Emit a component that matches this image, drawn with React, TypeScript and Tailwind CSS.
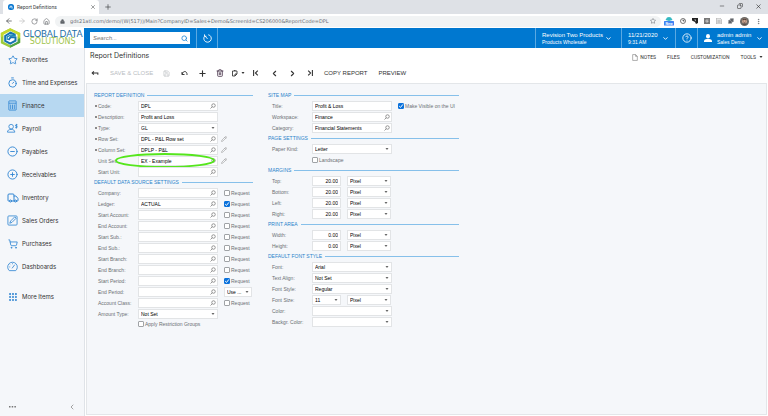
import { useId, useState } from "react";
import type { ReactNode } from "react";
import {
  ArrowLeft, ArrowRight, ChevronDown, ChevronLeft, ChevronRight, CircleHelp, CircleMinus,
  CirclePlus, Copy, EllipsisVertical, Grip, House, Lock, Minus, Pencil, Plus, Puzzle, RotateCw,
  Save, Search, ShoppingCart, Star, Timer, Trash2, Truck, X,
} from "lucide-react";

function Caret({ className = "" }: { className?: string }) {
  return (
    <svg viewBox="0 0 6 4" className={`h-[2px] w-[4px] shrink-0 ${className}`} fill="currentColor">
      <path d="M0 0h6L3 4z" />
    </svg>
  );
}

/* ---------- browser chrome ---------- */

function BrowserChrome() {
  return (
    <div className="font-[Roboto,sans-serif]">
      <div className="flex h-[14px] items-end bg-[#dee1e6]">
        <div className="ml-[3px] flex h-[14px] w-[96px] items-center rounded-t-[3px] bg-white pr-[3px] pl-[5px] text-[5px] text-[#3c4043]">
          <svg viewBox="0 0 12 12" className="mr-[3px] size-[6px]">
            <rect width="12" height="12" rx="5" fill="#0a78d1" />
            <path d="M4 8V6a2 2 0 1 1 4 0v3" fill="none" stroke="#fff" strokeWidth="1.8" />
          </svg>
          <span>Report Definitions</span>
          <button aria-label="Close tab" className="ml-auto"><X size={6} /></button>
        </div>
        <button aria-label="New tab" className="ml-[5px] flex h-[14px] items-center text-[#3c4043]"><Plus size={8} /></button>
        <div className="ml-auto flex h-[12px] items-center self-start text-[#222]">
          <button aria-label="Minimize" className="flex w-[18px] justify-center"><Minus size={6} /></button>
          <button aria-label="Restore" className="flex w-[18px] justify-center"><Copy size={6} className="-scale-x-100" /></button>
          <button aria-label="Close" className="flex w-[19px] justify-center"><X size={7} /></button>
        </div>
      </div>
      <div className="flex h-[14px] items-center bg-white pl-[5px] text-[#5f6368]">
        <button aria-label="Back" className="mr-[5px] text-[#3c4043]"><ArrowLeft size={8} /></button>
        <button aria-label="Forward" className="mr-[5px] text-[#bbb]"><ArrowRight size={8} /></button>
        <button aria-label="Reload" className="mr-[5px]"><RotateCw size={7} /></button>
        <button aria-label="Home"><House size={7} /></button>
        <div className="ml-[5px] flex h-[11px] flex-1 items-center rounded-full bg-[#f1f3f4] px-[5px]">
          <Lock size={5} fill="currentColor" />
          <input aria-label="Address" readOnly className="ml-[5px] h-[10px] flex-1 bg-transparent font-['DejaVu_Sans',sans-serif] text-[5px] leading-[10px] text-[#6b6f74] outline-none"
            value="gds21atl.com/demo/(W(517))/Main?CompanyID=Sales+Demo&ScreenId=CS206000&ReportCode=DPL" />
          <button aria-label="Bookmark"><Star size={6} /></button>
        </div>
        <div className="flex w-[107px] items-center justify-between pr-[6px] pl-[3px]">
          <svg viewBox="0 0 20 20" className="size-[10px]">
            <path d="M3 8l3-5 4-1 4 1 3 5-7 2z" fill="#35b9c2" />
            <rect y="10" width="20" height="9" rx="1" fill="#3f83f3" />
            <text x="10" y="17" textAnchor="middle" fontSize="7" fontWeight="700" fill="#fff">New</text>
          </svg>
          <svg viewBox="0 0 12 12" className="size-[6px]" fill="none" stroke="#555" strokeWidth="1.6">
            <circle cx="6" cy="6" r="5" /><path d="M6 6l3-3M6 3v3h3" />
          </svg>
          <svg viewBox="0 0 12 12" className="size-[6px]">
            <path d="M0 0h12v10l-4 2-2-4-6-3z" fill="#222" /><path d="M4 3h4v4z" fill="#aaa" />
          </svg>
          <svg viewBox="0 0 12 12" className="size-[6px]">
            <rect width="12" height="12" fill="#777" /><path d="M9 4H4v4h4V6H6" stroke="#fff" fill="none" />
          </svg>
          <svg viewBox="0 0 12 12" className="size-[6px]">
            <path d="M1 0h7l3 3v9H1z" fill="#e4e4e4" stroke="#999" /><path d="M3 5h6M3 7h6M3 9h6" stroke="#aaa" />
          </svg>
          <Puzzle size={6} fill="currentColor" />
          <svg viewBox="0 0 18 18" className="size-[9px]">
            <circle cx="9" cy="9" r="9" fill="#6d6a66" />
            <circle cx="9" cy="8" r="5" fill="#cda893" />
            <path d="M4 7c1-5 9-5 10 0-3-2-7-2-10 0zM5 15c2-3 6-3 8 0z" fill="#4b3b35" />
            <path d="M6 8h2M10 8h2M7 11h4" stroke="#4b3b35" />
          </svg>
          <button aria-label="Menu"><EllipsisVertical size={7} /></button>
        </div>
      </div>
    </div>
  );
}

/* ---------- app header ---------- */

function Logo() {
  return (
    <div className="flex h-[20px] w-[84px] shrink-0 items-center overflow-hidden bg-white">
      <svg viewBox="0 0 62 60" className="h-[20px] w-[21px] shrink-0">
        <path d="M30 1L60 15V44L30 59L2 46V15z" fill="#9ccb3b" />
        <path d="M30 1L60 15V30L30 14L2 28V15z" fill="#c3d82e" />
        <path d="M60 30V44L30 59V47z" fill="#4ea447" />
        <path d="M31 9L52 20V41L31 52L10 41V20z" fill="#fff" />
        <path d="M46 21L31 14L15 24V39L30 47L46 38V28L32 27L25 36" fill="none" stroke="#1673b1" strokeWidth="6" />
        <path d="M21 36V27L32 21L47 24" fill="none" stroke="#1b8bb5" strokeWidth="4" />
      </svg>
      <div className="ml-[2px] flex flex-col items-center whitespace-nowrap">
        <span className="font-[Lato,sans-serif] text-[9px] leading-[8px] text-[#1b6ea5]">GLOBAL DATA</span>
        <span className="font-['DejaVu_Sans',sans-serif] text-[8px] leading-[8px] text-[#9fc54d]">SOLUTIONS</span>
      </div>
    </div>
  );
}

function HeaderText({ top, bottom }: { top: string; bottom: string }) {
  return (
    <span className="flex flex-col text-left whitespace-nowrap">
      <span className="text-[6px] leading-[7px]">{top}</span>
      <span className="text-[5px] leading-[6px]">{bottom}</span>
    </span>
  );
}

function Header() {
  return (
    <header className="flex h-[20px] bg-[#0078d0] text-white">
      <Logo />
      <div className="flex w-[112px] items-center px-[6px]">
        <label className="flex h-[12px] w-full items-center bg-white pr-[2px] pl-[3px]">
          <input aria-label="Search" placeholder="Search..." className="h-[12px] min-w-0 flex-1 text-[6px] text-[#333] italic outline-none placeholder:text-[#777]" />
          <Search size={7} strokeWidth={3} className="text-[#2d8fd8]" />
        </label>
      </div>
      <button aria-label="Business date" className="flex w-[22px] items-center justify-center border-x border-[#5aa9e2]">
        <svg viewBox="0 0 24 24" className="size-[9px]" fill="none" stroke="currentColor" strokeWidth="2.4">
          <path d="M14 2A10 10 0 1 1 4 6M12 13L5 5M4 1v5h5" />
        </svg>
      </button>
      <button className="ml-auto flex w-[86px] items-center border-l border-[#5aa9e2] pl-[6px]">
        <HeaderText top="Revision Two Products" bottom="Products Wholesale" />
        <ChevronDown size={7} strokeWidth={3} className="mr-[9px] ml-auto" />
      </button>
      <button className="flex w-[54px] items-center border-l border-[#5aa9e2] pl-[6px]">
        <HeaderText top="11/21/2020" bottom="9:31 AM" />
        <ChevronDown size={7} strokeWidth={3} className="mr-[6px] ml-auto" />
      </button>
      <button aria-label="Help" className="flex w-[22px] items-center justify-center border-l border-[#5aa9e2]"><CircleHelp size={10} /></button>
      <button className="flex w-[71px] items-center border-l border-[#5aa9e2] pl-[6px]">
        <svg viewBox="0 0 16 16" className="mr-[5px] size-[8px]" fill="currentColor">
          <ellipse cx="8" cy="4.5" rx="4" ry="4.5" /><path d="M0 16v-3c1-3 5-3 8-3s7 0 8 3v3z" />
        </svg>
        <HeaderText top="admin admin" bottom="Sales Demo" />
        <ChevronDown size={7} strokeWidth={3} className="mr-[5px] ml-auto" />
      </button>
    </header>
  );
}

/* ---------- sidebar ---------- */

function NavIcon({ children }: { children: ReactNode }) {
  return (
    <svg viewBox="0 0 24 24" className="size-[11px]" fill="none" stroke="currentColor" strokeWidth="1.8">
      {children}
    </svg>
  );
}

const NAV: { label: string; icon: ReactNode }[] = [
  { label: "Favorites", icon: <Star size={10} strokeWidth={2} /> },
  { label: "Time and Expenses", icon: <Timer size={11} strokeWidth={2} /> },
  { label: "Finance", icon: <NavIcon><rect x="4" y="2" width="16" height="20" rx="1" /><path d="M4 7h16M8 10v10M12 10v10M16 10v10" /></NavIcon> },
  { label: "Payroll", icon: <NavIcon><circle cx="9" cy="8" r="5" /><path d="M1 20c0-4 3-6 8-6s8 2 8 6zM23 4h-3c-2 0-2 3 0 3h1c2 0 2 3 0 3h-3M20.500 2v10" /></NavIcon> },
  { label: "Payables", icon: <CircleMinus size={11} strokeWidth={2} /> },
  { label: "Receivables", icon: <CirclePlus size={11} strokeWidth={2} /> },
  { label: "Inventory", icon: <Truck size={12} strokeWidth={2} /> },
  { label: "Sales Orders", icon: <NavIcon><rect x="2" y="2" width="20" height="20" rx="2" /><path d="M6 18l2-5L17 4l3 3-9 9z" /></NavIcon> },
  { label: "Purchases", icon: <ShoppingCart size={10} strokeWidth={2} /> },
  { label: "Dashboards", icon: <NavIcon><path d="M5 21a10.500 10.500 0 1 1 14 0z" /><path d="M11 16l6-8M5 13h2M12 5v2M7 8l1 1" /></NavIcon> },
];

function Sidebar() {
  const [active, setActive] = useState("Finance");
  return (
    <nav className="flex w-[84px] shrink-0 flex-col bg-[#f5f7fa] font-[Inter,sans-serif] text-[6px] text-[#333]">
      {NAV.map((n) => (
        <a key={n.label} href="#" onClick={() => setActive(n.label)}
          className={`flex h-[23px] items-center whitespace-nowrap ${active === n.label ? "bg-[#b7d8f1]" : ""}`}>
          <span className="ml-[6px] flex w-[13px] justify-center text-[#3085d2]">{n.icon}</span>
          <span className="ml-[3px]">{n.label}</span>
        </a>
      ))}
      <a href="#" className="mt-[7px] flex h-[23px] items-center">
        <span className="ml-[6px] flex w-[13px] justify-center text-[#3085d2]"><Grip size={10} strokeWidth={3} /></span>
        <span className="ml-[3px]">More Items</span>
      </a>
      <div className="mt-auto flex h-[18px] items-center justify-between pr-[8px] pl-[9px] text-[#777]">
        <button aria-label="More">
          <svg viewBox="0 0 7 2" className="h-[2px] w-[7px]" fill="currentColor"><path d="M0 0h1.500v1.500H0zM2.700 0h1.500v1.500H2.700zM5.400 0h1.500v1.500H5.400z" /></svg>
        </button>
        <button aria-label="Collapse"><ChevronLeft size={8} /></button>
      </div>
    </nav>
  );
}

/* ---------- form controls ---------- */

const BOX = "flex h-[10px] items-center border border-[#e2e4e6] bg-white";

function TextBox({ id, value = "", lookup = false, label }: { id?: string; value?: string; lookup?: boolean; label?: string }) {
  return (
    <div className={`${BOX} w-[80px] shrink-0`}>
      <input id={id} aria-label={label} defaultValue={value} className="h-[8px] min-w-0 flex-1 pl-[2px] text-[5px] leading-[8px] text-black outline-none" />
      {lookup && (
        <button aria-label="Look up" className="px-[1px] text-[#777]">
          <svg viewBox="0 0 12 12" className="size-[6px]" fill="none" stroke="currentColor" strokeWidth="1.500">
            <circle cx="7" cy="5" r="3.500" /><path d="M4.500 7.500L1 11" />
          </svg>
        </button>
      )}
    </div>
  );
}

function NumberBox({ id, value }: { id?: string; value: string }) {
  return (
    <div className={`${BOX} mr-[6px] w-[29px] shrink-0`}>
      <input id={id} defaultValue={value} className="h-[8px] w-full pr-[2px] text-right text-[5px] leading-[8px] text-black outline-none" />
    </div>
  );
}

function Select({ id, value = "", width = "w-[80px]", label }: { id?: string; value?: string; width?: string; label?: string }) {
  return (
    <div className={`${BOX} relative shrink-0 ${width}`}>
      <select id={id} aria-label={label} defaultValue={value} className="h-[8px] w-full appearance-none pl-[2px] text-[5px] leading-[8px] text-black outline-none">
        <option value={value}>{value}</option>
      </select>
      <Caret className="pointer-events-none absolute right-[2px] text-[#666]" />
    </div>
  );
}

function Check({ label, checked = false }: { label: string; checked?: boolean }) {
  const [on, setOn] = useState(checked);
  return (
    <label className="flex items-center whitespace-nowrap text-[#6b6f73]">
      <span className="relative mr-[1px] flex">
        <input type="checkbox" checked={on} onChange={() => setOn(!on)}
          className="size-[6px] appearance-none rounded-[1px] border border-[#a0a3a6] bg-white checked:border-[#0b72dc] checked:bg-[#0b72dc]" />
        {on && (
          <svg viewBox="0 0 6 6" className="pointer-events-none absolute inset-0" fill="none" stroke="#fff">
            <path d="M1.200 3.100l1.300 1.300 2.400-3" />
          </svg>
        )}
      </span>
      {label}
    </label>
  );
}

function Section({ title, children }: { title: string; children: ReactNode }) {
  return (
    <section>
      <h2 className="flex h-[10px] items-center gap-[3px] text-[5px] whitespace-nowrap text-[#2a83cb]">
        {title}
        <span className="h-px flex-1 bg-[#86c0ea]" />
      </h2>
      {children}
    </section>
  );
}

interface RowProps {
  label?: string;
  required?: boolean;
  children: (id: string) => ReactNode;
}

function Row({ label, required = false, children }: RowProps) {
  const id = useId();
  return (
    <div className="relative flex h-[11px] items-center">
      <label htmlFor={id} className="flex w-[44px] shrink-0 items-center whitespace-nowrap text-[#6b6f73]">
        <span className="flex w-[4px] shrink-0 items-center">
          {required && <span className="ml-px size-[2px] rounded-full bg-[#666]" />}
        </span>
        {label}
      </label>
      {children(id)}
    </div>
  );
}

const EditButton = () => (
  <button aria-label="Edit" className="ml-[3px] text-[#888]"><Pencil size={6} /></button>
);

/* ---------- form ---------- */

const SOURCES = [
  { label: "Company:" },
  { label: "Ledger:", value: "ACTUAL", checked: true },
  { label: "Start Account:" },
  { label: "End Account:" },
  { label: "Start Sub.:" },
  { label: "End Sub.:" },
  { label: "Start Branch:" },
  { label: "End Branch:" },
  { label: "Start Period:", checked: true },
  { label: "End Period:", range: true },
  { label: "Account Class:" },
];

function LeftColumn() {
  return (
    <div className="w-[159px] shrink-0">
      <Section title="REPORT DEFINITION">
        <Row label="Code:" required>{(id) => <TextBox id={id} value="DPL" lookup />}</Row>
        <Row label="Description:" required>{(id) => <TextBox id={id} value="Profit and Loss" />}</Row>
        <Row label="Type:" required>{(id) => <Select id={id} value="GL" />}</Row>
        <Row label="Row Set:" required>{(id) => <><TextBox id={id} value="DPL - P&L Row set" lookup /><EditButton /></>}</Row>
        <Row label="Column Set:" required>{(id) => <><TextBox id={id} value="DPLP - P&L" lookup /><EditButton /></>}</Row>
        <Row label="Unit Set:">
          {(id) => (
            <>
              <TextBox id={id} value="EX - Example" lookup /><EditButton />
              <svg viewBox="0 0 100 15" className="pointer-events-none absolute top-[-2px] left-[21px] h-[15px] w-[100px]" fill="none">
                <ellipse cx="50" cy="7.500" rx="49" ry="6.500" stroke="#55e61c" strokeWidth="1.900" />
              </svg>
            </>
          )}
        </Row>
        <Row label="Start Unit:">{(id) => <TextBox id={id} lookup />}</Row>
      </Section>
      <Section title="DEFAULT DATA SOURCE SETTINGS">
        {SOURCES.map((s) => (
          <Row key={s.label} label={s.label}>
            {(id) => (
              <>
                <TextBox id={id} value={s.value} lookup />
                <span className="ml-[6px]">
                  {s.range ? <Select value="Use ..." width="w-[28px]" label="End period mode" /> : <Check label="Request" checked={s.checked} />}
                </span>
              </>
            )}
          </Row>
        ))}
        <Row label="Amount Type:">{(id) => <Select id={id} value="Not Set" />}</Row>
        <div className="flex h-[10px] items-center pl-[44px]"><Check label="Apply Restriction Groups" /></div>
      </Section>
    </div>
  );
}

function SizeRow({ label, value }: { label: string; value: string }) {
  return (
    <Row label={label}>
      {(id) => <><NumberBox id={id} value={value} /><Select value="Pixel" width="w-[44px]" label={`${label} unit`} /></>}
    </Row>
  );
}

function RightColumn() {
  return (
    <div className="w-[191px] shrink-0">
      <Section title="SITE MAP">
        <Row label="Title:">
          {(id) => <><TextBox id={id} value="Profit & Loss" /><span className="ml-[6px]"><Check label="Make Visible on the UI" checked /></span></>}
        </Row>
        <Row label="Workspace:">{(id) => <TextBox id={id} value="Finance" lookup />}</Row>
        <Row label="Category:">{(id) => <TextBox id={id} value="Financial Statements" lookup />}</Row>
      </Section>
      <Section title="PAGE SETTINGS">
        <Row label="Paper Kind:">{(id) => <Select id={id} value="Letter" />}</Row>
        <div className="flex h-[11px] items-center pl-[44px]"><Check label="Landscape" /></div>
      </Section>
      <Section title="MARGINS">
        <SizeRow label="Top:" value="20.00" />
        <SizeRow label="Bottom:" value="20.00" />
        <SizeRow label="Left:" value="20.00" />
        <SizeRow label="Right:" value="20.00" />
      </Section>
      <Section title="PRINT AREA">
        <SizeRow label="Width:" value="0.00" />
        <SizeRow label="Height:" value="0.00" />
      </Section>
      <Section title="DEFAULT FONT STYLE">
        <Row label="Font:">{(id) => <Select id={id} value="Arial" />}</Row>
        <Row label="Text Align:">{(id) => <Select id={id} value="Not Set" />}</Row>
        <Row label="Font Style:">{(id) => <Select id={id} value="Regular" />}</Row>
        <Row label="Font Size:">
          {(id) => <><Select id={id} value="11" width="mr-[6px] w-[29px]" /><Select value="Pixel" width="w-[44px]" label="Font size unit" /></>}
        </Row>
        <Row label="Color:">{(id) => <Select id={id} />}</Row>
        <Row label="Backgr. Color:">{(id) => <Select id={id} />}</Row>
      </Section>
    </div>
  );
}

/* ---------- page ---------- */

function ToolButton({ label, children, className = "" }: { label: string; children: ReactNode; className?: string }) {
  return <button aria-label={label} className={`flex h-[18px] w-[18px] items-center justify-center ${className}`}>{children}</button>;
}

function Toolbar() {
  return (
    <div className="flex h-[20px] items-center text-[6px] whitespace-nowrap text-[#333]">
      <ToolButton label="Back">
        <svg viewBox="0 0 14 10" className="h-[6px] w-[8px]" fill="none" stroke="currentColor" strokeWidth="1.800"><path d="M12 8V5H2M5 2L2 5l3 3" /></svg>
      </ToolButton>
      <button className="w-[53px] pl-[6px] text-left text-[#b9bcbf]" disabled>SAVE &amp; CLOSE</button>
      <ToolButton label="Save" className="text-[#b9bcbf]"><Save size={7} /></ToolButton>
      <ToolButton label="Undo">
        <svg viewBox="0 0 14 12" className="h-[6px] w-[7px]" fill="none" stroke="currentColor" strokeWidth="1.900"><path d="M2 4v5h5M2 9c2-9 11-7 10 1" /></svg>
      </ToolButton>
      <ToolButton label="Add"><Plus size={9} strokeWidth={3} /></ToolButton>
      <ToolButton label="Delete" className="text-[#4d3a50]"><Trash2 size={8} strokeWidth={2.5} /></ToolButton>
      <ToolButton label="Clipboard" className="gap-[3px]">
        <svg viewBox="0 0 12 14" className="h-[7px] w-[6px] shrink-0" fill="none" stroke="currentColor" strokeWidth="1.700"><path d="M6 12H1V2h9v6L6 12V8h4M4 1h3" /></svg>
        <Caret />
      </ToolButton>
      <ToolButton label="First">
        <svg viewBox="0 0 10 10" className="size-[6px]" fill="none" stroke="currentColor" strokeWidth="1.800"><path d="M1 0v10M8 1L4 5l4 4" /></svg>
      </ToolButton>
      <ToolButton label="Previous"><ChevronLeft size={9} strokeWidth={3} /></ToolButton>
      <ToolButton label="Next"><ChevronRight size={9} strokeWidth={3} /></ToolButton>
      <ToolButton label="Last">
        <svg viewBox="0 0 10 10" className="size-[6px]" fill="none" stroke="currentColor" strokeWidth="1.800"><path d="M9 0v10M2 1l4 4-4 4" /></svg>
      </ToolButton>
      <button className="ml-[5px]">COPY REPORT</button>
      <button className="ml-[11px]">PREVIEW</button>
    </div>
  );
}

export default function App() {
  return (
    <div className="flex min-h-screen flex-col bg-white font-['Liberation_Sans',sans-serif] text-[5px] leading-[8px]">
      <BrowserChrome />
      <Header />
      <div className="flex flex-1">
        <Sidebar />
        <main className="flex min-w-0 flex-1 flex-col border-l border-[#dfe3e8] pr-px pb-px pl-px">
          <div className="flex h-[15px] items-center text-[#333]">
            <h1 className="pt-px pl-[4px] font-[Inter,sans-serif] text-[7px] leading-[10px]">Report Definitions</h1>
            <div className="ml-auto flex items-center gap-[11px] pt-[3px] pr-[4px] font-[Roboto,sans-serif]">
              <button className="flex items-center gap-[2px]">
                <svg viewBox="0 0 10 12" className="h-[7px] w-[6px]" fill="#fff" stroke="#777"><path d="M1 1h5l3 3v7H1zM6 1v3h3" /></svg>
                NOTES
              </button>
              <button>FILES</button>
              <button>CUSTOMIZATION</button>
              <button className="flex items-center gap-[3px]">TOOLS <Caret /></button>
            </div>
          </div>
          <Toolbar />
          <div className="flex flex-1 items-start gap-[15px] border border-[#e3e6e9] bg-[#f5f7fa] pt-[6px] pl-[7px]">
            <LeftColumn />
            <RightColumn />
          </div>
        </main>
      </div>
    </div>
  );
}
